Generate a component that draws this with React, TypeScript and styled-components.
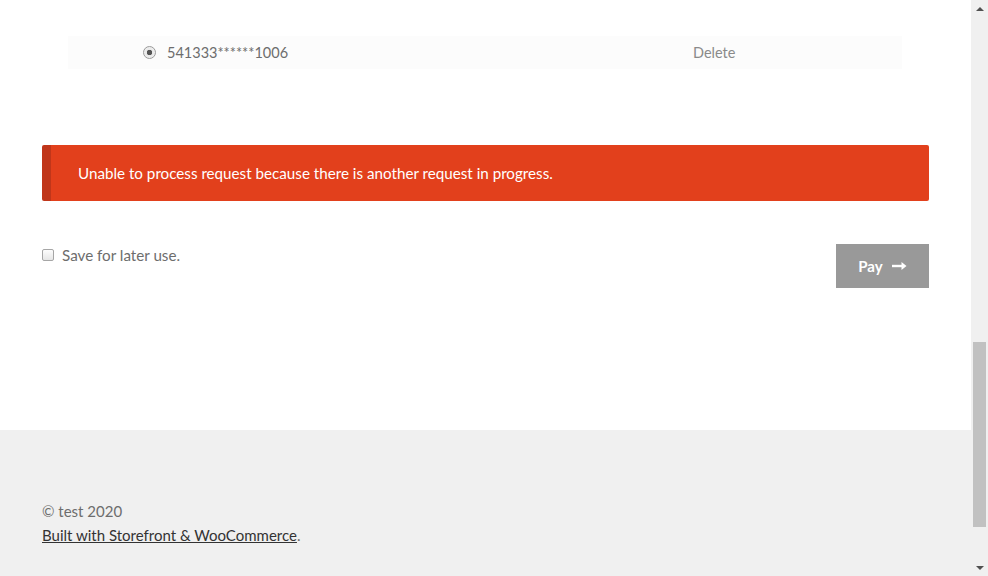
import React from 'react';
import styled, { createGlobalStyle } from 'styled-components';

const GlobalStyle = createGlobalStyle`
  html, body {
    margin: 0;
    padding: 0;
    background: #ffffff;
    overflow: hidden;
  }
  body {
    font-family: "Lato", "Open Sans", sans-serif;
    color: #6d6d6d;
  }
`;

const Screen = styled.div`
  display: flex;
  width: 988px;
  height: 576px;
  overflow: hidden;
`;

const Page = styled.div`
  width: 971px;
  display: flex;
  flex-direction: column;
`;

const Content = styled.main`
  height: 430px;
  background: #ffffff;
  padding: 36px 42px 0 42px;
  box-sizing: border-box;
`;

const SavedCards = styled.ul`
  list-style: none;
  margin: 0 27px 0 26px;
  padding: 0;
`;

const CardRow = styled.li`
  display: flex;
  align-items: center;
  height: 33px;
  background: #fcfcfc;
  font-size: 14.5px;
`;

const CardLabel = styled.label`
  display: flex;
  align-items: center;
  width: 625px;
  box-sizing: border-box;
  padding-left: 75px;
  color: #6d6d6d;
`;

const Radio = styled.span`
  width: 11px;
  height: 11px;
  border-radius: 50%;
  border: 1px solid #9a9a9a;
  background: radial-gradient(circle, #555 0 2.5px, #e8e8e8 3px, #f6f6f6 100%);
  margin-right: 11px;
  box-sizing: content-box;
`;

const DeleteLink = styled.a`
  color: #8a8a8a;
  text-decoration: none;
`;

const ErrorBanner = styled.div`
  margin-top: 76px;
  height: 56px;
  display: flex;
  align-items: center;
  background: #e2401c;
  border-left: 9px solid #c0361a;
  border-radius: 2px;
  padding-left: 27px;
  color: #ffffff;
  font-size: 15.2px;
`;

const FormRow = styled.div`
  margin-top: 43px;
  display: flex;
  justify-content: space-between;
  align-items: flex-start;
`;

const SaveLabel = styled.label`
  display: flex;
  align-items: center;
  margin-top: 2px;
  font-size: 15.2px;
  color: #6d6d6d;
`;

const Checkbox = styled.span`
  width: 10px;
  height: 10px;
  border: 1px solid #a6a6a6;
  border-radius: 2px;
  background: linear-gradient(#fdfdfd, #e6e6e6);
  margin-right: 8px;
  box-sizing: content-box;
`;

const PayButton = styled.button`
  width: 93px;
  height: 44px;
  border: none;
  background: #999999;
  color: #ffffff;
  font-family: "Lato", sans-serif;
  font-weight: 700;
  font-size: 15px;
  display: flex;
  align-items: center;
  justify-content: center;
  gap: 9px;
  padding: 0;
`;

const Footer = styled.footer`
  flex: 1;
  background: #f0f0f0;
  padding: 69px 42px 0 42px;
  font-size: 15px;
  line-height: 24px;
  color: #6d6d6d;
`;

const FooterLink = styled.a`
  color: #333333;
  text-decoration: underline;
`;

const Scrollbar = styled.div`
  width: 17px;
  background: #f0f0f0;
  display: flex;
  flex-direction: column;
  align-items: center;
`;

const ScrollArrow = styled.div<{ $down?: boolean }>`
  height: 17px;
  width: 17px;
  display: flex;
  align-items: center;
  justify-content: center;
  &::before {
    content: '';
    border-left: 4px solid transparent;
    border-right: 4px solid transparent;
    ${(p) => (p.$down ? 'border-top: 4px solid #505050;' : 'border-bottom: 4px solid #505050;')}
  }
`;

const ScrollSpacer = styled.div<{ $h: number }>`
  height: ${(p) => p.$h}px;
`;

const ScrollThumb = styled.div`
  width: 13px;
  height: 185px;
  background: #c1c1c1;
`;

const ArrowIcon = () => (
  <svg width="15" height="10" viewBox="0 0 15 10">
    <path d="M0 5h11" stroke="#fff" strokeWidth="2.4" />
    <path d="M9.5 1l5 4-5 4z" fill="#fff" />
  </svg>
);

export default function App() {
  return (
    <>
      <GlobalStyle />
      <Screen>
        <Page>
          <Content>
            <SavedCards>
              <CardRow>
                <CardLabel>
                  <Radio />
                  541333******1006
                </CardLabel>
                <DeleteLink>Delete</DeleteLink>
              </CardRow>
            </SavedCards>
            <ErrorBanner>Unable to process request because there is another request in progress.</ErrorBanner>
            <FormRow>
              <SaveLabel>
                <Checkbox />
                Save for later use.
              </SaveLabel>
              <PayButton>
                Pay <ArrowIcon />
              </PayButton>
            </FormRow>
          </Content>
          <Footer>
            <div>© test 2020</div>
            <div>
              <FooterLink>Built with Storefront &amp; WooCommerce</FooterLink>.
            </div>
          </Footer>
        </Page>
        <Scrollbar>
          <ScrollArrow />
          <ScrollSpacer $h={325} />
          <ScrollThumb />
          <ScrollSpacer $h={32} />
          <ScrollArrow $down />
        </Scrollbar>
      </Screen>
    </>
  );
}
